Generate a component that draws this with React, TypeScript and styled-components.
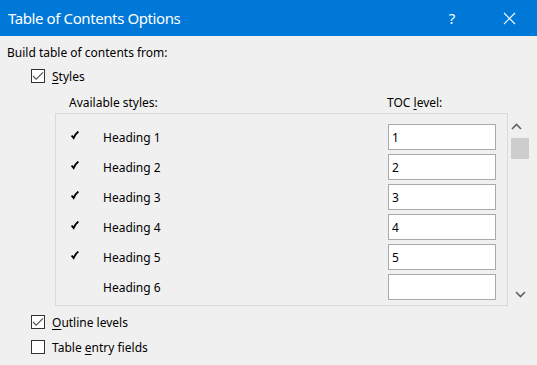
import React from 'react';
import styled, { createGlobalStyle } from 'styled-components';

const GlobalStyle = createGlobalStyle`
  html, body {
    margin: 0;
    padding: 0;
    background: #f0f0f0;
  }
  body {
    font-family: "Noto Sans", "Open Sans", sans-serif;
    font-size: 12px;
    color: #000;
  }
`;

const Dialog = styled.div`
  width: 537px;
  height: 365px;
  background: #f0f0f0;
  overflow: hidden;
`;

const TitleBar = styled.div`
  height: 36px;
  background: #0078d7;
  color: #fff;
  display: flex;
  align-items: center;
  padding: 0 10px 0 8px;
  box-sizing: border-box;
`;

const Title = styled.div`
  flex: 1;
  font-size: 15px;
  letter-spacing: -0.4px;
`;

const TitleButton = styled.div<{ $w: number; $gap?: number }>`
  width: ${(p) => p.$w}px;
  margin-right: ${(p) => p.$gap ?? 0}px;
  display: flex;
  justify-content: center;
  align-items: center;
  font-size: 15px;
`;

const Body = styled.div`
  padding: 9px 0 0 7px;
`;

const Caption = styled.div`
  height: 16px;
  line-height: 16px;
`;

const CheckRow = styled.label<{ $top: number }>`
  display: flex;
  align-items: center;
  margin-left: 24px;
  margin-top: ${(p) => p.$top}px;
  height: 16px;
  gap: 7px;
`;

const Box = styled.span`
  width: 14px;
  height: 14px;
  box-sizing: border-box;
  border: 1px solid #333;
  background: #fff;
  display: flex;
  align-items: center;
  justify-content: center;
`;

const Key = styled.span`
  text-decoration: underline;
  text-underline-offset: 2px;
`;

const Headers = styled.div`
  display: flex;
  justify-content: space-between;
  margin-top: 11px;
  height: 16px;
  line-height: 16px;
`;

const HeaderCell = styled.div<{ $left?: number; $w?: number }>`
  margin-left: ${(p) => p.$left ?? 0}px;
  width: ${(p) => (p.$w ? `${p.$w}px` : 'auto')};
`;

const ListArea = styled.div`
  display: flex;
  margin-top: 2px;
  margin-left: 48px;
`;

const ListBox = styled.div`
  width: 453px;
  box-sizing: border-box;
  border: 1px solid #dadada;
  padding: 10px 11px 5px 0;
  display: flex;
  flex-direction: column;
  gap: 4px;
`;

const Row = styled.div`
  display: flex;
  align-items: center;
  height: 26px;
`;

const Tick = styled.div`
  width: 16px;
  margin-left: 15px;
  display: flex;
  align-items: center;
  margin-top: -4px;
`;

const StyleName = styled.div`
  flex: 1;
  margin-left: 16px;
`;

const LevelInput = styled.div`
  width: 108px;
  height: 26px;
  box-sizing: border-box;
  border: 1px solid #a9a9a9;
  background: #fff;
  padding-left: 3px;
  display: flex;
  align-items: center;
`;

const ScrollBar = styled.div`
  width: 20px;
  margin-left: 2px;
  display: flex;
  flex-direction: column;
  align-items: center;
  justify-content: space-between;
  padding: 4px 0 0;
  box-sizing: border-box;
`;

const Thumb = styled.div`
  width: 18px;
  height: 21px;
  background: #cdcdcd;
  margin-top: 4px;
`;

const Check = () => (
  <svg width="12" height="10" viewBox="0 0 12 10">
    <path d="M1 5 L4.2 8.2 L11 1.4" fill="none" stroke="#555" strokeWidth="1.2" />
  </svg>
);

const SmallTick = () => (
  <svg width="8" height="9" viewBox="0 0 8 9">
    <path d="M0.6 4.6 L2.6 7 Q4.5 2.8 7.4 0.6" fill="none" stroke="#000" strokeWidth="1.9" />
  </svg>
);

const Chevron = ({ up }: { up?: boolean }) => (
  <svg width="11" height="7" viewBox="0 0 11 7">
    <path
      d={up ? 'M1 6 L5.5 1.5 L10 6' : 'M1 1 L5.5 5.5 L10 1'}
      fill="none"
      stroke="#606060"
      strokeWidth="1.6"
    />
  </svg>
);

const headings = [
  { name: 'Heading 1', level: '1', on: true },
  { name: 'Heading 2', level: '2', on: true },
  { name: 'Heading 3', level: '3', on: true },
  { name: 'Heading 4', level: '4', on: true },
  { name: 'Heading 5', level: '5', on: true },
  { name: 'Heading 6', level: '', on: false },
];

export default function App() {
  return (
    <Dialog>
      <GlobalStyle />
      <TitleBar>
        <Title>Table of Contents Options</Title>
        <TitleButton $w={24} $gap={27}>?</TitleButton>
        <TitleButton $w={36}>
          <svg width="13" height="13" viewBox="0 0 13 13">
            <path d="M1 1 L12 12 M12 1 L1 12" stroke="#fff" strokeWidth="1.1" />
          </svg>
        </TitleButton>
      </TitleBar>
      <Body>
        <Caption>Build table of contents from:</Caption>
        <CheckRow $top={7}>
          <Box>
            <Check />
          </Box>
          <span>
            <Key>S</Key>tyles
          </span>
        </CheckRow>
        <Headers>
          <HeaderCell $left={62}>Available styles:</HeaderCell>
          <HeaderCell $w={150}>
            TOC <Key>l</Key>evel:
          </HeaderCell>
        </Headers>
        <ListArea>
          <ListBox>
            {headings.map((h) => (
              <Row key={h.name}>
                <Tick>{h.on && <SmallTick />}</Tick>
                <StyleName>{h.name}</StyleName>
                <LevelInput>{h.level}</LevelInput>
              </Row>
            ))}
          </ListBox>
          <ScrollBar>
            <div>
              <Chevron up />
              <Thumb />
            </div>
            <div style={{ marginBottom: 4 }}>
              <Chevron />
            </div>
          </ScrollBar>
        </ListArea>
        <CheckRow $top={8}>
          <Box>
            <Check />
          </Box>
          <span>
            <Key>O</Key>utline levels
          </span>
        </CheckRow>
        <CheckRow $top={9}>
          <Box />
          <span>
            Table <Key>e</Key>ntry fields
          </span>
        </CheckRow>
      </Body>
    </Dialog>
  );
}
